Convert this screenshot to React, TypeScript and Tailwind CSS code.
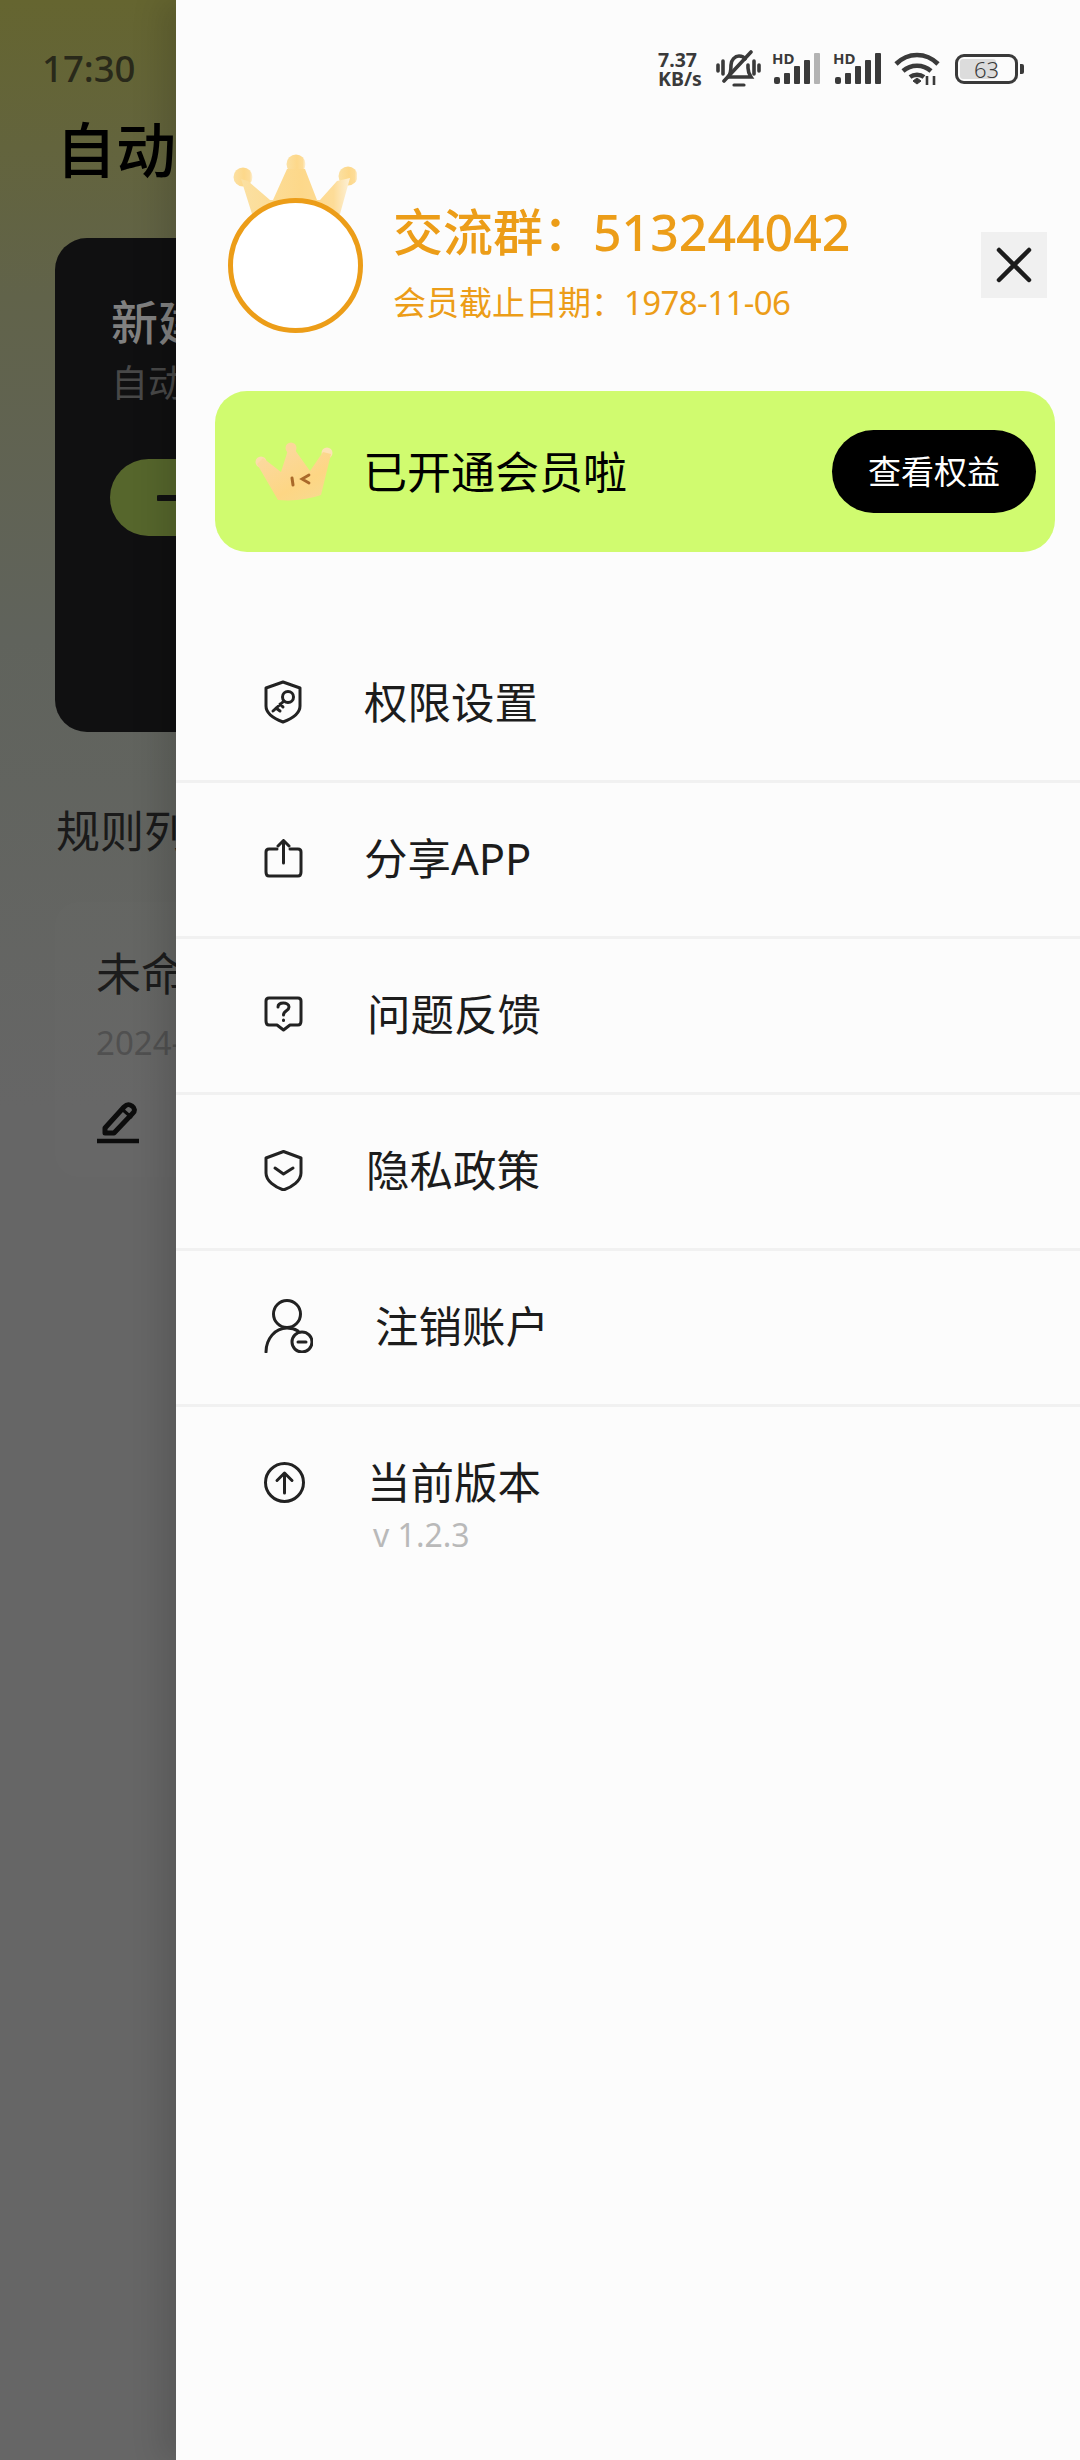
const FONT = "font-['Noto_Sans','Noto_Sans_CJK_SC',sans-serif]";

function SignalIcon({ lastBar }: { lastBar: string }) {
  return (
    <svg width="48" height="31" viewBox="0 0 48 31" className="overflow-visible">
      <text x="-1" y="11" fontSize="15" fontWeight="700" fill="#3a3a3a" fontFamily="Noto Sans, sans-serif">
        HD
      </text>
      <rect x="1" y="24" width="6" height="7" rx="2" fill="#3a3a3a" />
      <rect x="11" y="20" width="6" height="11" rx="1" fill="#3a3a3a" />
      <rect x="21" y="13" width="6" height="18" rx="1" fill="#3a3a3a" />
      <rect x="31" y="7" width="6" height="24" rx="1" fill="#3a3a3a" />
      <rect x="41" y="0" width="6" height="31" rx="1" fill={lastBar} />
    </svg>
  );
}

function StatusBar() {
  return (
    <div className="flex h-[37px] items-center justify-end pr-[56px] text-[#3a3a3a]">
      <div className="flex w-[48px] flex-col gap-[2px] text-[19.500px] leading-[17px] font-bold">
        <div>7.37</div>
        <div>KB/s</div>
      </div>
      <svg width="45" height="38" viewBox="0 0 45 38" fill="none" stroke="#3a3a3a" strokeWidth="3.6" strokeLinecap="round" className="ml-[10px]">
        <path d="M12 27c3-3 3-8 3-12 0-5 4-9 8-9 3 0 5 1 6 3M32 15v3c0 3 1 6 3 9H12" />
        <path d="M8 31 35 2" />
        <path d="M18 35h10" strokeWidth="3.200" />
        <path d="M2 15v6M7 11v13M38 11v13M43 15v6" />
      </svg>
      <div className="ml-[12px]">
        <SignalIcon lastBar="#b3b3b3" />
      </div>
      <div className="ml-[13px]">
        <SignalIcon lastBar="#3a3a3a" />
      </div>
      <svg width="46" height="34" viewBox="0 0 46 34" fill="none" stroke="#3a3a3a" strokeWidth="4.600" className="ml-[12px]">
        <path d="M2 12c12-12 30-12 42 0" />
        <path d="M9 19c8-7 20-7 28 0" />
        <path d="M16 25c4-3 10-3 14 0" />
        <path d="M19 29l4-3 4 3-4 3z" fill="#3a3a3a" strokeWidth="1" />
        <path d="M33 24v9M40 24v9" strokeWidth="2.600" />
      </svg>
      <div className="ml-[15px] flex items-center">
        <div className="relative flex h-[30px] w-[63px] items-center justify-center rounded-[9px] border-[3px] border-[#3a3a3a]">
          <div className="absolute top-[2px] bottom-[2px] left-[2px] w-[36px] rounded-[3px] bg-[#dcdcdc]" />
          <span className="relative text-[22px] leading-[24px] font-light">63</span>
        </div>
        <div className="ml-[2px] h-[10px] w-[4px] rounded-r-[2px] bg-[#3a3a3a]" />
      </div>
    </div>
  );
}

function BackdropApp() {
  return (
    <div className="h-full w-full bg-[linear-gradient(180deg,#656530_0%,#61634a_12%,#60635c_26%,#666666_45%,#666666_100%)] whitespace-nowrap">
      <div className="pt-[48px] pl-[42px] text-[36.500px] leading-[40px] font-medium text-[#29291a]">17:30</div>
      <div className="mt-[27px] pl-[56px] text-[60px] leading-[70px] font-medium text-black">自动回复</div>
      <div className="mt-[53px] ml-[55px] h-[494px] w-[970px] rounded-[32px] bg-[#101011] pt-[56px] pl-[56px]">
        <div className="text-[47px] leading-[56px] font-medium text-[#808080]">新建规则</div>
        <div className="mt-[11px] text-[37px] leading-[44px] text-[#484848]">自动回复消息</div>
        <div className="mt-[54px] -ml-[1px] flex h-[77px] w-[300px] items-center rounded-full bg-[#56662c] pl-[47px]">
          <svg width="46" height="46" viewBox="0 0 46 46" stroke="#111111" strokeWidth="6" strokeLinecap="round">
            <path d="M2 23h42M23 2v42" />
          </svg>
        </div>
      </div>
      <div className="mt-[71px] pl-[56px] text-[44px] leading-[56px] text-[#1a1a1a]">规则列表</div>
      <div className="mt-[43px] ml-[55px] h-[275px] w-[970px] rounded-[24px] bg-white/[0.012] pt-[47px] pl-[41px]">
        <div className="text-[45px] leading-[50px] text-[#1c1c1c]">未命名规则</div>
        <div className="mt-[24px] text-[33px] leading-[40px] text-[#505050]">2024-06-18</div>
        <svg width="44" height="44" viewBox="0 0 44 44" fill="none" stroke="#0c0c0c" strokeLinecap="round" strokeLinejoin="round" className="mt-[37px]">
          <path d="M9 28 28 7c3-3 5-3 8-1 3 2 3 5 1 7L18 33H9z" strokeWidth="5" />
          <path d="M27 10l8 7" strokeWidth="3" />
          <path d="M1 41h42" strokeWidth="4.500" strokeLinecap="butt" />
        </svg>
      </div>
    </div>
  );
}

function BigCrown() {
  return (
    <svg width="124" height="66" viewBox="0 0 124 66" className="absolute top-[-44px] left-[5px]">
      <defs>
        <linearGradient id="bigCrown" x1="0" x2="1" y1="0" y2="0">
          <stop offset="0" stopColor="#fbe0a2" />
          <stop offset="0.55" stopColor="#fdd88a" />
          <stop offset="0.85" stopColor="#fddc98" />
          <stop offset="1" stopColor="#fdf1d8" />
        </linearGradient>
      </defs>
      <circle cx="10" cy="23" r="9.500" fill="url(#bigCrown)" />
      <circle cx="63" cy="10" r="9.500" fill="url(#bigCrown)" />
      <circle cx="115" cy="22" r="9.500" fill="url(#bigCrown)" />
      <path d="M8 25 15 27 37 46H40L54 15H72L84 46H87L104 27 117 24 107 60H19Z" fill="url(#bigCrown)" />
    </svg>
  );
}

function SmallCrown() {
  return (
    <svg width="78" height="60" viewBox="0 0 78 60" className="ml-[40px] shrink-0">
      <defs>
        <linearGradient id="smallCrown" x1="0" x2="0.8" y1="0" y2="1">
          <stop offset="0" stopColor="#fbd9a4" />
          <stop offset="0.7" stopColor="#fdd684" />
          <stop offset="1" stopColor="#f8d98f" />
        </linearGradient>
      </defs>
      <circle cx="6" cy="20" r="5.500" fill="#fcdcaa" />
      <circle cx="36" cy="6" r="5.500" fill="#fcd79a" />
      <circle cx="72" cy="11" r="5.500" fill="#fde2b5" />
      <path d="M2 22 8 16 26 30 33 8H40L55 29 68 10 76 12 66 53Q46 60 23 58Z" fill="url(#smallCrown)" />
      <path d="M37 36l1 7" stroke="#a9692a" strokeWidth="3" strokeLinecap="round" />
      <path d="M54 33l-7 4 7 4" stroke="#a9692a" strokeWidth="2.800" fill="none" strokeLinecap="round" />
    </svg>
  );
}

const iconProps = {
  fill: "none",
  stroke: "#222222",
  strokeWidth: 3,
  strokeLinecap: "round" as const,
  strokeLinejoin: "round" as const,
};

function KeyShieldIcon() {
  return (
    <svg width="38" height="44" viewBox="0 0 38 44" {...iconProps}>
      <path d="M19 2 36 8V26C36 34 27 39 19 42 11 39 2 34 2 26V8Z" />
      <circle cx="24" cy="17" r="5.500" />
      <path d="M20 21 9 31M12 28l4 3M16 24l3 3" />
    </svg>
  );
}

function ShareIcon() {
  return (
    <svg width="39" height="39" viewBox="0 0 39 39" {...iconProps}>
      <path d="M13 10H5Q2 10 2 13V33Q2 37 5 37H34Q37 37 37 33V13Q37 10 34 10H26" />
      <path d="M19.500 24V2M14 7l5.500-5.500L25 7" />
    </svg>
  );
}

function QuestionIcon() {
  return (
    <svg width="39" height="36" viewBox="0 0 39 36" {...iconProps}>
      <path d="M5 2H34Q37 2 37 5V25Q37 29 34 29H26L19.500 34 13 29H5Q2 29 2 25V5Q2 2 5 2Z" />
      <path d="M14 11c0-3 3-4 5.500-4S25 8.500 25 11c0 4-5.500 3.500-5.500 8" />
      <path d="M19.500 24v.5" />
    </svg>
  );
}

function CheckShieldIcon() {
  return (
    <svg width="39" height="41" viewBox="0 0 39 41" {...iconProps}>
      <path d="M19.500 1.500 37 8V23C37 31 28 37 19.500 40 11 37 2 31 2 23V8Z" />
      <path d="M11 18l8.500 6L29 18" />
    </svg>
  );
}

function UserMinusIcon() {
  return (
    <svg width="49" height="54" viewBox="0 0 49 54" {...iconProps}>
      <circle cx="23" cy="15" r="13.500" />
      <path d="M2 53C2 40 11 29 23 29c4 0 8 1 11 3" />
      <circle cx="38" cy="43" r="10" />
      <path d="M34 43h8" />
    </svg>
  );
}

function ArrowUpIcon() {
  return (
    <svg width="41" height="41" viewBox="0 0 41 41" {...iconProps}>
      <circle cx="20.500" cy="20.500" r="19" />
      <path d="M20.500 31V11M13 18.500 20.500 11 28 18.500" />
    </svg>
  );
}

const menu = [
  { icon: <KeyShieldIcon />, label: "权限设置", iconBox: "w-[100px]" },
  { icon: <ShareIcon />, label: "分享APP", iconBox: "w-[100px]" },
  { icon: <QuestionIcon />, label: "问题反馈", iconBox: "w-[103px]" },
  { icon: <CheckShieldIcon />, label: "隐私政策", iconBox: "w-[102px]" },
  { icon: <UserMinusIcon />, label: "注销账户", iconBox: "w-[111px]" },
  { icon: <ArrowUpIcon />, label: "当前版本", iconBox: "w-[103px]", sub: "v 1.2.3" },
];

export default function App() {
  return (
    <div className={`relative h-[2460px] w-[1080px] overflow-hidden ${FONT}`}>
      <BackdropApp />
      {/* drawer sits over the dimmed page */}
      <div className="absolute top-0 right-0 bottom-0 w-[904px] bg-[#fcfcfc] pt-[50px] shadow-[-16px_0_28px_rgba(0,0,0,0.12)]">
        <StatusBar />

        <div className="mt-[111px] flex h-[135px] items-center pl-[52px]">
          <div className="relative h-[135px] w-[135px] shrink-0">
            <BigCrown />
            <div className="relative h-full w-full rounded-full border-[5px] border-[#ec9d18] bg-white" />
          </div>
          <div className="mb-[5px] ml-[30px] flex flex-col gap-[20px] text-[#ec9d18]">
            <div className="text-[50px] leading-[60px] font-medium whitespace-nowrap">交流群：513244042</div>
            <div className="text-[33px] leading-[42px] whitespace-nowrap">
              会员截止日期：<span className="tracking-[-0.6px]">1978-11-06</span>
            </div>
          </div>
          <div className="mr-[33px] mb-[2px] ml-auto flex h-[66px] w-[66px] shrink-0 items-center justify-center bg-[#f0f0f0]">
            <svg width="36" height="36" viewBox="0 0 36 36" stroke="#1c1c1c" strokeWidth="4.500" strokeLinecap="round">
              <path d="M3 3 33 33M33 3 3 33" />
            </svg>
          </div>
        </div>

        <div className="mt-[58px] mr-[25px] ml-[39px] flex h-[161px] items-center rounded-[32px] bg-[#d0fb6f]">
          <SmallCrown />
          <div className="ml-[30px] text-[44px] leading-[60px] whitespace-nowrap text-black">已开通会员啦</div>
          <div className="mr-[19px] ml-auto flex h-[83px] w-[204px] items-center justify-center rounded-full bg-black text-[33px] text-white">
            查看权益
          </div>
        </div>

        <div className="mt-[75px]">
          {menu.map((item, i) => (
            <div
              key={item.label}
              className={`flex h-[156px] items-start pt-[47px] pl-[88px] text-[#1c1c1c] ${i < menu.length - 1 ? "border-b-[3px] border-[#f1f1f1]" : ""}`}
            >
              <div className={`flex h-[56px] shrink-0 items-center ${item.iconBox}`}>{item.icon}</div>
              <div>
                <div className="text-[43.500px] leading-[56px] whitespace-nowrap">{item.label}</div>
                {item.sub && <div className="mt-[5px] pl-[6px] text-[32px] leading-[40px] text-[#b9b9b9]">{item.sub}</div>}
              </div>
            </div>
          ))}
        </div>
      </div>
    </div>
  );
}
